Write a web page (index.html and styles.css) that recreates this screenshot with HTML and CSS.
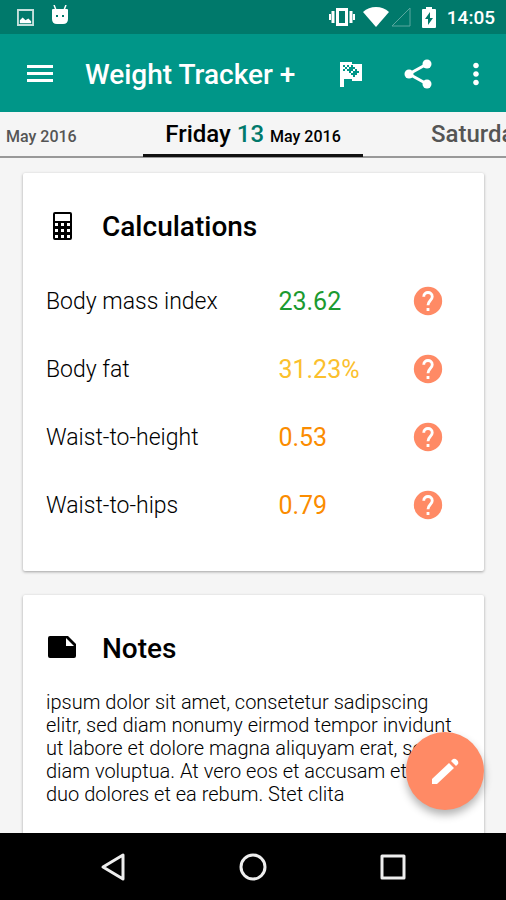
FILE: index.html
```html
<!DOCTYPE html>
<html lang="en">
<head>
<meta charset="utf-8">
<meta name="viewport" content="width=device-width, initial-scale=1">
<title>Weight Tracker +</title>
<link rel="stylesheet" href="styles.css">
</head>
<body>
<svg class="symbols" aria-hidden="true">
  <symbol id="help" viewBox="0 0 24 24"><circle cx="12" cy="12" r="10"/><path fill="none" stroke="#fff" stroke-width="2" d="M9 9c0-4 6-4 6 0 0 2.500-3 3-3 6M12 17v2"/></symbol>
</svg>
<div class="status">
  <svg class="status-picture" viewBox="0 0 18 18" aria-hidden="true"><path fill="none" stroke="currentColor" stroke-width="2" d="M1 1h16v16H1z"/><path fill="#fff" d="M3 15v-3l3-3 3 3 3-2 3 3v2z"/></svg>
  <svg class="status-droid" viewBox="0 0 18 20" aria-hidden="true"><path stroke="currentColor" stroke-width="1.500" d="M3 0l2 5M15 0l-2 5"/><path fill="currentColor" fill-rule="evenodd" d="M2 4h14q1 0 1 1v9q0 5-5 5H6q-5 0-5-5V5q0-1 1-1zm3 6v2h2v-2zm6 0v2h2v-2z"/></svg>
  <svg class="status-vibrate" viewBox="0 0 26 20" aria-hidden="true"><path fill="none" stroke="currentColor" stroke-width="3" d="M8.500 2.500h9v15h-9zM4 4v12M22 4v12"/><path stroke="currentColor" stroke-width="2" d="M1 7v6M25 7v6"/></svg>
  <svg class="status-wifi" viewBox="0 0 26 20" aria-hidden="true"><path fill="currentColor" d="M0 5Q5.500 0 13 0t13 5L13 20z"/></svg>
  <svg class="status-signal" viewBox="0 0 20 20" aria-hidden="true"><path fill="none" stroke="currentColor" d="M1 19L19 1v18z"/></svg>
  <svg class="status-battery" viewBox="0 0 14 21" aria-hidden="true"><path fill="currentColor" fill-rule="evenodd" d="M4 0h6v2h3q1 0 1 1v17q0 1-1 1H1q-1 0-1-1V3q0-1 1-1h3zm4 5l-5 7h3v6l5-7H8z"/></svg>
  <time>14:05</time>
</div>
<header class="toolbar">
  <button class="menu" type="button" aria-label="Menu"><svg viewBox="0 0 34 34"><path d="M4 8h26v3H4zM4 15h26v3H4zM4 22h26v3H4z"/></svg></button>
  <h1>Weight Tracker +</h1>
  <button type="button" aria-label="Goal"><svg viewBox="0 0 34 34"><path fill-rule="evenodd" d="M6 5h12v2h10v17H18v-2h-8v8H6zM9 8v2h2v2H9v2h2v-2h2v2h2v2h2v2h2v2h2v-2h2v-2h2v-2h-2v-2h-2v2h-2v-2h2v-2h-2v-2h-2v2h-2v2h-2v-2h2V8h-2v2h-2V8zM17 14h2v2h-2z"/></svg></button>
  <button type="button" aria-label="Share"><svg viewBox="0 0 34 34"><path fill="none" stroke="currentColor" stroke-width="3" d="M26 7L8 17l18 10"/><circle cx="8" cy="17" r="4.500"/><circle cx="26" cy="7" r="4.500"/><circle cx="26" cy="27" r="4.500"/></svg></button>
  <button class="more" type="button" aria-label="More options"><svg viewBox="0 0 24 24"><path d="M12 8c1.100 0 2-.9 2-2s-.9-2-2-2-2 .9-2 2 .9 2 2 2zm0 2c-1.100 0-2 .9-2 2s.9 2 2 2 2-.9 2-2-.9-2-2-2zm0 6c-1.100 0-2 .9-2 2s.9 2 2 2 2-.9 2-2-.9-2-2-2z"/></svg></button>
</header>
<nav class="days" aria-label="Days">
  <a class="previous" href="#"><small>May 2016</small></a>
  <a class="current" href="#" aria-current="date">Friday <b>13</b> <small>May 2016</small></a>
  <a class="next" href="#">Saturday</a>
</nav>
<main>
  <section class="card">
    <h2><svg viewBox="0 0 34 34" aria-hidden="true"><path fill-rule="evenodd" d="M9 3h15q2 0 2 2v24q0 2-2 2H9q-2 0-2-2V5q0-2 2-2zm0 2v7h15V5zm0 9v3h3v-3zm6 0v3h3v-3zm6 0v3h3v-3zM9 20v3h3v-3zm6 0v3h3v-3zm6 0v3h3v-3zM9 26v3h3v-3zm6 0v3h3v-3zm6 0v3h3v-3z"/></svg>Calculations</h2>
    <dl>
      <div><dt>Body mass index</dt><dd class="good">23.62</dd><dd><button type="button" aria-label="About body mass index"><svg><use href="#help"/></svg></button></dd></div>
      <div><dt>Body fat</dt><dd class="fair">31.23%</dd><dd><button type="button" aria-label="About body fat"><svg><use href="#help"/></svg></button></dd></div>
      <div><dt>Waist-to-height</dt><dd class="warn">0.53</dd><dd><button type="button" aria-label="About waist-to-height"><svg><use href="#help"/></svg></button></dd></div>
      <div><dt>Waist-to-hips</dt><dd class="warn">0.79</dd><dd><button type="button" aria-label="About waist-to-hips"><svg><use href="#help"/></svg></button></dd></div>
    </dl>
  </section>
  <section class="card">
    <h2><svg viewBox="0 0 34 34" aria-hidden="true"><path fill-rule="evenodd" d="M4 5h18l8 8v12q0 2-2 2H4q-2 0-2-2V7q0-2 2-2zm16 2v8h8z"/></svg>Notes</h2>
    <p>ipsum dolor sit amet, consetetur sadipscing elitr, sed diam nonumy eirmod tempor invidunt ut labore et dolore magna aliquyam erat, sed diam voluptua. At vero eos et accusam et<br>duo dolores et ea rebum. Stet clita</p>
  </section>
  <button class="edit" type="button" aria-label="Edit"><svg viewBox="0 0 34 34"><path d="M4 25L21 9l5 5L9 30H4zM23 7l2-2q2-1 4 1t1 4l-2 2z"/></svg></button>
</main>
<footer class="system">
  <button type="button" aria-label="Back"><svg viewBox="0 0 30 30"><path d="M5 15L25 3v24z"/></svg></button>
  <button type="button" aria-label="Home"><svg viewBox="0 0 30 30"><circle cx="15" cy="15" r="12"/></svg></button>
  <button type="button" aria-label="Recent apps"><svg viewBox="0 0 30 30"><path d="M4 4h22v22H4z"/></svg></button>
</footer>
</body>
</html>
```
FILE: styles.css
```css
* {
  box-sizing: border-box;
  margin: 0;
}

body {
  display: flex;
  flex-direction: column;
  height: 100vh;
  overflow: hidden;
  background: #f5f5f5;
  color: #000;
  font-family: Roboto, sans-serif;
}

svg {
  display: block;
  flex: none;
  width: 34px;
  height: 34px;
  fill: currentColor;
}

button {
  display: grid;
  flex: none;
  place-items: center;
  padding: 0;
  border: 0;
  background: none;
  color: inherit;
}

.symbols {
  display: none;
}

.status {
  display: flex;
  flex: none;
  align-items: center;
  height: 34px;
  padding: 0 11px 0 17px;
  background: #00796b;
  color: #fff;
}

.status time {
  font-size: 19px;
  font-weight: 500;
}

.status-picture {
  width: 17px;
  height: 17px;
  color: #c5e0dc;
}

.status-droid {
  width: 18px;
  height: 20px;
  margin: 0 auto 4px 17px;
}

.status-vibrate {
  width: 26px;
  height: 20px;
  margin-right: 8px;
}

.status-wifi {
  width: 26px;
  height: 20px;
  margin-right: 2px;
}

.status-signal {
  width: 20px;
  height: 20px;
  margin-right: 11px;
  opacity: 0.35;
}

.status-battery {
  width: 14px;
  height: 21px;
  margin-right: 11px;
}

.toolbar {
  display: flex;
  flex: none;
  align-items: center;
  height: 78px;
  padding: 2px 5px 0 23px;
  background: #009688;
  color: #fff;
}

.toolbar h1 {
  flex: 1;
  padding-left: 28px;
  font-size: 28px;
  font-weight: 500;
  white-space: nowrap;
}

.toolbar button {
  width: 67px;
  height: 67px;
}

.toolbar .menu {
  width: 34px;
}

.toolbar .more {
  width: 50px;
}

.days {
  display: grid;
  flex: none;
  grid-template-columns: 1fr 220px 1fr;
  height: 46px;
  border-bottom: 2px solid #999;
  font-size: 24px;
  font-weight: 500;
  line-height: 45px;
  white-space: nowrap;
}

.days a {
  min-width: 0;
  height: 45px;
  color: #555;
  text-decoration: none;
}

.days small {
  font-size: 16px;
}

.days b {
  color: #00796b;
  font-weight: 500;
}

.days .previous {
  padding-left: 6px;
}

.days .current {
  border-bottom: 3px solid #111;
  color: #000;
  text-align: center;
}

.days .next {
  padding-left: 68px;
  overflow: hidden;
}

main {
  position: relative;
  flex: 1;
  min-height: 0;
  padding: 15px 22px 0 23px;
  overflow: hidden;
}

.card {
  margin-bottom: 24px;
  padding: 36px 23px 32px;
  border-radius: 2px;
  background: #fff;
  box-shadow: 0 1px 3px rgba(0, 0, 0, 0.35);
}

.card h2 {
  display: flex;
  align-items: center;
  gap: 22px;
  height: 34px;
  font-size: 28px;
  font-weight: 500;
}

.card dl {
  padding-top: 24px;
}

.card dl div {
  display: grid;
  grid-template-columns: 56% 1fr 50px;
  align-items: center;
  height: 68px;
}

.card dt {
  font-size: 23px;
  font-weight: 350;
}

.card dd {
  font-size: 25px;
}

.card dd button {
  color: #ff8a65;
}

.good {
  color: #1b9a30;
}

.fair {
  color: #fbc02d;
}

.warn {
  color: #fb8c00;
}

.card p {
  padding-top: 26px;
  font-size: 20px;
  font-weight: 350;
  line-height: 23px;
}

.edit {
  position: absolute;
  right: 22px;
  bottom: 23px;
  width: 78px;
  height: 78px;
  border-radius: 50%;
  background: #ff8a65;
  box-shadow: 0 5px 9px rgba(0, 0, 0, 0.3);
  color: #fff;
}

.system {
  display: flex;
  flex: none;
  justify-content: center;
  height: 67px;
  background: #000;
  color: #eee;
}

.system button {
  width: 140px;
}

.system svg {
  width: 30px;
  height: 30px;
  fill: none;
  stroke: currentColor;
  stroke-width: 3;
  stroke-linejoin: round;
}
```
